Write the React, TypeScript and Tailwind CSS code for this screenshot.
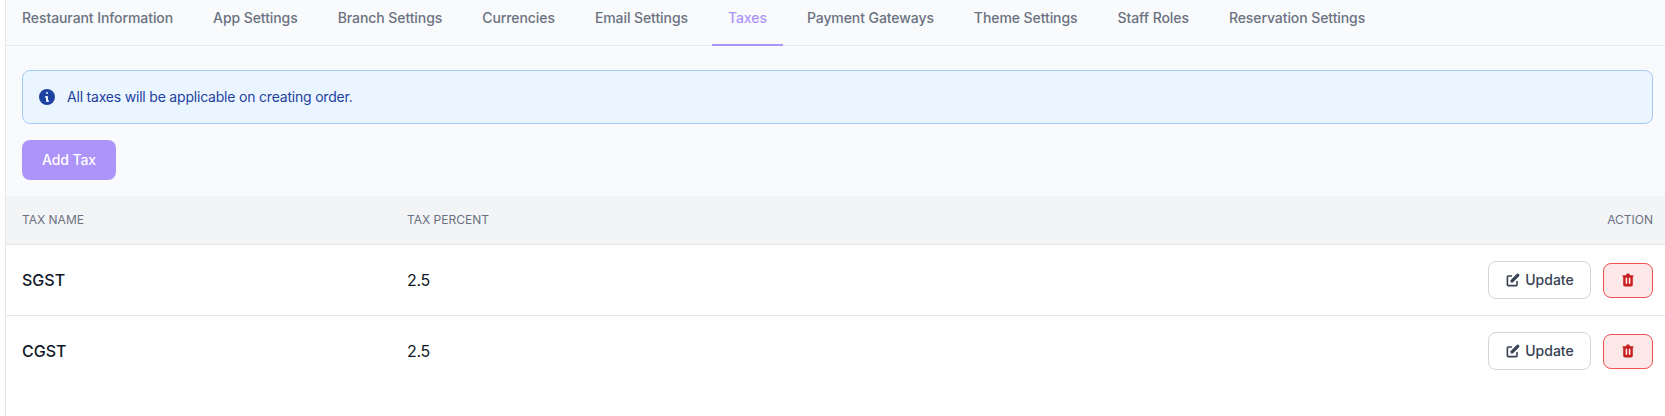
import React from 'react';

const TABS = [
  'Restaurant Information',
  'App Settings',
  'Branch Settings',
  'Currencies',
  'Email Settings',
  'Taxes',
  'Payment Gateways',
  'Theme Settings',
  'Staff Roles',
  'Reservation Settings',
];

const TAXES = [
  { name: 'SGST', percent: '2.5' },
  { name: 'CGST', percent: '2.5' },
];

const App: React.FC = () => {
  return (
    <div className="h-[416px] overflow-hidden bg-white font-['Inter',sans-serif] ml-[5px] border-l border-gray-200">
      {/* Tabs */}
      <div className="bg-gray-50">
        <ul className="flex gap-2 border-b border-gray-200 h-[46px] text-sm font-medium tracking-[-0.08px]">
          {TABS.map((tab) => (
            <li key={tab}>
              <span
                className={
                  tab === 'Taxes'
                    ? 'block px-4 pt-2 h-[46px] border-b-2 border-[#ac94fa] text-[#ac94fa]'
                    : 'block px-4 pt-2 h-[46px] text-gray-500'
                }
              >
                {tab}
              </span>
            </li>
          ))}
        </ul>

        <div className="pl-4 pr-3 pt-6 pb-4">
          <div className="flex items-center gap-2.5 h-[54px] px-[14px] rounded-lg border border-[#a4cafe] bg-[#ebf5ff] text-sm tracking-[-0.2px] text-[#1e429f]">
            <svg viewBox="0 0 20 20" fill="currentColor" className="w-5 h-5">
              <path
                fillRule="evenodd"
                clipRule="evenodd"
                d="M18 10a8 8 0 11-16 0 8 8 0 0116 0zm-7-4a1 1 0 11-2 0 1 1 0 012 0zM9 9a1 1 0 000 2v3a1 1 0 001 1h1a1 1 0 100-2v-3a1 1 0 00-1-1H9z"
              />
            </svg>
            <span>All taxes will be applicable on creating order.</span>
          </div>
          <button className="mt-4 h-10 w-[94px] rounded-lg bg-[#ac94fa] text-sm font-medium tracking-[-0.08px] text-white">
            Add Tax
          </button>
        </div>
      </div>

      {/* Table */}
      <table className="w-full table-fixed">
        <thead className="bg-gray-100">
          <tr className="h-[48px] border-b border-gray-200 text-xs text-gray-500 uppercase">
            <th className="w-[401px] pl-4 text-left font-normal">Tax Name</th>
            <th className="text-left font-normal">Tax Percent</th>
            <th className="pr-3 text-right font-normal">Action</th>
          </tr>
        </thead>
        <tbody>
          {TAXES.map((tax) => (
            <tr key={tax.name} className="h-[71px] border-b border-gray-200 last:border-b-0">
              <td className="pl-4 text-base font-medium text-gray-900">{tax.name}</td>
              <td className="text-base tracking-[-0.3px] text-gray-900">{tax.percent}</td>
              <td className="pr-3">
                <div className="flex items-center justify-end gap-3">
                  <button className="flex items-center justify-center gap-1 w-[103px] h-[38px] rounded-lg border border-gray-300 bg-white text-sm font-medium text-gray-700">
                    <svg viewBox="0 0 20 20" fill="currentColor" className="w-4 h-4">
                      <path d="M17.414 2.586a2 2 0 00-2.828 0L7 10.172V13h2.828l7.586-7.586a2 2 0 000-2.828z" />
                      <path
                        fillRule="evenodd"
                        clipRule="evenodd"
                        d="M2 6a2 2 0 012-2h4a1 1 0 010 2H4v10h10v-4a1 1 0 112 0v4a2 2 0 01-2 2H4a2 2 0 01-2-2V6z"
                      />
                    </svg>
                    Update
                  </button>
                  <button className="flex items-center justify-center w-[50px] h-[35px] mt-px rounded-lg border border-[#f05252] bg-[#fde8e8] text-[#c81e1e]">
                    <svg viewBox="0 0 20 20" fill="currentColor" className="w-4 h-4">
                      <path
                        fillRule="evenodd"
                        clipRule="evenodd"
                        d="M9 2a1 1 0 00-.894.553L7.382 4H4a1 1 0 000 2v10a2 2 0 002 2h8a2 2 0 002-2V6a1 1 0 100-2h-3.382l-.724-1.447A1 1 0 0011 2H9zM7 8a1 1 0 012 0v6a1 1 0 11-2 0V8zm5-1a1 1 0 00-1 1v6a1 1 0 102 0V8a1 1 0 00-1-1z"
                      />
                    </svg>
                  </button>
                </div>
              </td>
            </tr>
          ))}
        </tbody>
      </table>
    </div>
  );
};

export default App;
